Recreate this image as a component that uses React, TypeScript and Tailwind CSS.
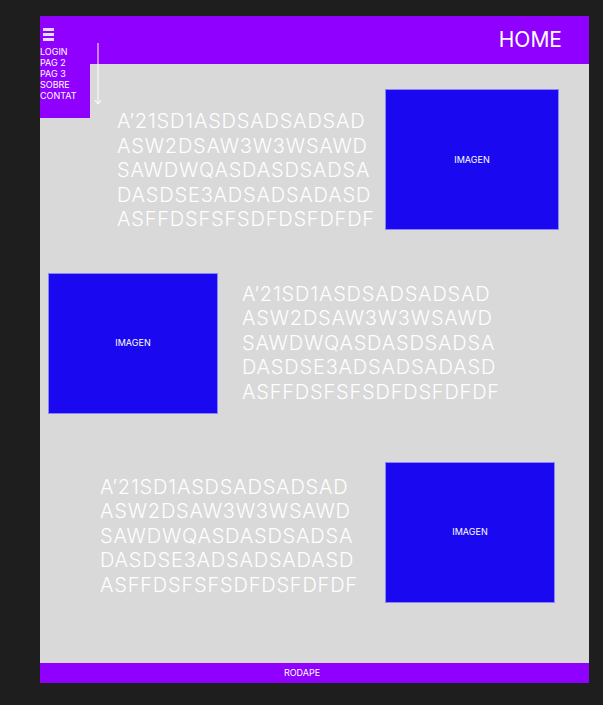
import React from 'react';

const lines = [
  'A’21SD1ASDSADSADSAD',
  'ASW2DSAW3W3WSAWD',
  'SAWDWQASDASDSADSA',
  'DASDSE3ADSADSADASD',
  'ASFFDSFSFSDFDSFDFDF',
];

const menu = ['LOGIN', 'PAG 2', 'PAG 3', 'SOBRE', 'CONTAT'];

const TextBlock = ({ className = '' }: { className?: string }) => (
  <div className={`text-[20px] leading-[24.5px] font-light tracking-[0.8px] text-white ${className}`}>
    {lines.map((l) => (
      <div key={l}>{l}</div>
    ))}
  </div>
);

const Imagen = ({ className = '' }: { className?: string }) => (
  <div
    className={`flex items-center justify-center bg-[#1a08f0] border border-[#8a86f5] text-[9px] text-white ${className}`}
  >
    IMAGEN
  </div>
);

export default function App() {
  return (
    <div className="min-h-screen bg-[#1e1e1e] pt-[16px] pl-[40px]" style={{ fontFamily: 'Inter, "Noto Sans", sans-serif' }}>
      <div className="relative w-[549px] flex flex-col">
        <header className="h-[48px] bg-[#8f00ff] flex items-center justify-end pr-[27px]">
          <span className="text-[21px] text-white">HOME</span>
        </header>

        {/* menu lateral */}
        <nav className="absolute left-0 top-0 w-[50px] h-[102px] bg-[#8f00ff] pt-[12px]">
          <div className="ml-[3px] w-[11px] flex flex-col gap-[2.5px]">
            <div className="h-[2.5px] bg-[#e6dcff]" />
            <div className="h-[2.5px] bg-[#e6dcff]" />
            <div className="h-[2.5px] bg-[#e6dcff]" />
          </div>
          <ul className="mt-[5px] text-[9px] leading-[11px] text-white">
            {menu.map((m) => (
              <li key={m}>{m}</li>
            ))}
          </ul>
        </nav>
        <svg className="absolute left-[54px] top-[27px]" width="8" height="64" viewBox="0 0 8 64">
          <line x1="4" y1="0" x2="4" y2="61" stroke="white" strokeWidth="1" />
          <path d="M1 57 L4 61 L7 57" fill="none" stroke="white" strokeWidth="1" />
        </svg>

        <main className="h-[599px] bg-[#d9d9d9] flex flex-col">
          <section className="flex items-start mt-[25px]">
            <TextBlock className="ml-[77px] mt-[20px]" />
            <Imagen className="ml-auto mr-[30px] w-[174px] h-[141px]" />
          </section>

          <section className="flex items-start mt-[41px]">
            <Imagen className="ml-[8px] w-[170px] h-[141px]" />
            <TextBlock className="ml-[24px] mt-[9px]" />
          </section>

          <section className="flex items-start mt-[48px]">
            <TextBlock className="ml-[60px] mt-[13px]" />
            <Imagen className="ml-auto mr-[34px] w-[170px] h-[141px]" />
          </section>
        </main>

        <footer className="h-[20px] bg-[#8f00ff] flex items-center justify-center pr-[25px] text-[9px] text-white">
          RODAPE
        </footer>
      </div>
    </div>
  );
}
